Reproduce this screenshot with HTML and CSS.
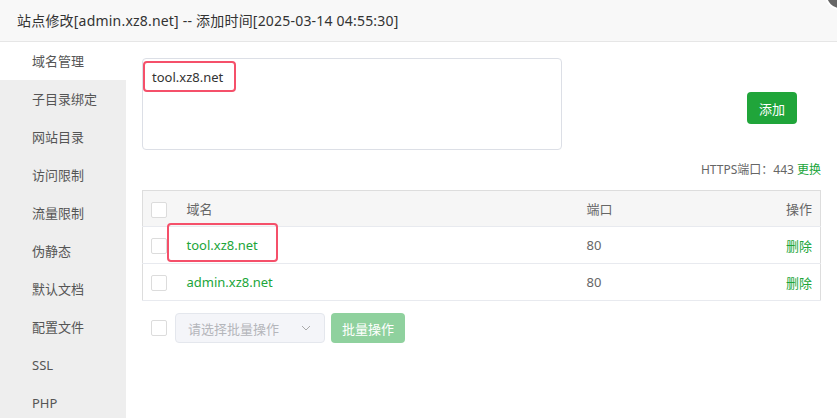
FILE: index.html
```html
<!DOCTYPE html>
<html lang="zh-CN">
<head>
    <meta charset="UTF-8">
    <meta name="viewport" content="width=device-width, initial-scale=1.0">
    <title>站点修改</title>
    <link rel="stylesheet" href="styles.css">
</head>
<body>
    <div class="dialog">
        <div class="dialog-title">站点修改[admin.xz8.net] -- 添加时间[2025-03-14 04:55:30]</div>
        <span class="close-btn"></span>

        <div class="dialog-body">
            <ul class="side-menu">
                <li class="active">域名管理</li>
                <li>子目录绑定</li>
                <li>网站目录</li>
                <li>访问限制</li>
                <li>流量限制</li>
                <li>伪静态</li>
                <li>默认文档</li>
                <li>配置文件</li>
                <li>SSL</li>
                <li>PHP</li>
            </ul>

            <div class="content">
                <div class="add-row">
                    <div class="domain-input">
                        <textarea id="domains">tool.xz8.net</textarea>
                        <span class="mark mark-input"></span>
                    </div>
                    <button type="button" class="btn btn-green">添加</button>
                </div>

                <div class="https-port">HTTPS端口：443 <a href="#">更换</a></div>

                <table class="domain-table">
                    <colgroup>
                        <col class="col-check">
                        <col class="col-name">
                        <col class="col-port">
                        <col>
                    </colgroup>
                    <thead>
                        <tr>
                            <th><span class="checkbox"></span></th>
                            <th>域名</th>
                            <th>端口</th>
                            <th class="right">操作</th>
                        </tr>
                    </thead>
                    <tbody>
                        <tr>
                            <td><span class="checkbox"></span></td>
                            <td class="name-cell"><a href="#">tool.xz8.net</a><span class="mark mark-row"></span></td>
                            <td>80</td>
                            <td class="right"><a href="#">删除</a></td>
                        </tr>
                        <tr>
                            <td><span class="checkbox"></span></td>
                            <td><a href="#">admin.xz8.net</a></td>
                            <td>80</td>
                            <td class="right"><a href="#">删除</a></td>
                        </tr>
                    </tbody>
                </table>

                <div class="batch-row">
                    <span class="checkbox"></span>
                    <div class="batch-select">
                        <span>请选择批量操作</span>
                        <svg width="10" height="6" viewBox="0 0 10 6"><path d="M1 1l4 4 4-4" fill="none" stroke="#aaa" stroke-width="1"/></svg>
                    </div>
                    <button type="button" class="btn btn-disabled">批量操作</button>
                </div>
            </div>
        </div>
    </div>
</body>
</html>
```

FILE: styles.css
```css
body {
    margin: 0;
    font-family: "Noto Sans", "Noto Sans CJK SC", sans-serif;
    color: #333;
    background: #fff;
}
.dialog {
    position: relative;
    width: 837px;
    height: 418px;
    overflow: hidden;
}
.dialog-title {
    height: 41px;
    line-height: 41px;
    padding-left: 17px;
    font-size: 14px;
    letter-spacing: 0.2px;
    color: #333;
    background: #f8f8f8;
    border-bottom: 1px solid #e6e6e6;
}
/* close button sits mostly outside the window, only its corner shows */
.close-btn {
    position: absolute;
    top: -20px;
    right: -18px;
    width: 26px;
    height: 26px;
    border-radius: 50%;
    background: #666;
    border: 2px solid #fff;
}
.close-btn::after {
    content: "";
    position: absolute;
    left: 2px;
    top: 12px;
    width: 10px;
    height: 2px;
    background: #fff;
    transform: rotate(-45deg);
}
.dialog-body {
    display: flex;
    height: 376px;
}
.side-menu {
    width: 126px;
    margin: 0;
    padding: 0;
    list-style: none;
    background: #eeeeee;
}
.side-menu li {
    height: 38px;
    line-height: 38px;
    padding-left: 32px;
    font-size: 13px;
    color: #555;
}
.side-menu li.active {
    background: #fff;
}
.content {
    flex: 1;
    padding: 16px 16px 0 16px;
}
.add-row {
    display: flex;
    justify-content: space-between;
    align-items: flex-start;
}
.domain-input {
    position: relative;
    width: 420px;
    height: 92px;
}
.domain-input textarea {
    box-sizing: border-box;
    width: 100%;
    height: 100%;
    padding: 9px 9px;
    border: 1px solid #dcdfe6;
    border-radius: 4px;
    font-family: inherit;
    font-size: 13px;
    line-height: 18px;
    color: #333;
    resize: none;
    outline: none;
}
.mark {
    position: absolute;
    border: 2px solid #f5506a;
    border-radius: 4px;
}
.mark-input {
    left: 1px;
    top: 3px;
    width: 89px;
    height: 27px;
}
.btn {
    border: none;
    border-radius: 4px;
    color: #fff;
    font-family: inherit;
    font-size: 13px;
    cursor: pointer;
}
.btn-green {
    width: 50px;
    height: 32px;
    margin-top: 34px;
    margin-right: 24px;
    background: #20a53a;
}
.btn-disabled {
    width: 74px;
    height: 30px;
    background: #8fd19e;
}
.https-port {
    margin-top: 12px;
    height: 16px;
    line-height: 16px;
    text-align: right;
    font-size: 12px;
    color: #666;
}
.https-port a,
.domain-table a {
    color: #20a53a;
    text-decoration: none;
}
.domain-table {
    width: 100%;
    margin-top: 12px;
    border-collapse: collapse;
    table-layout: fixed;
    border: 1px solid #ddd;
    font-size: 13px;
}
.col-check {
    width: 36px;
}
.col-name {
    width: 400px;
}
.col-port {
    width: 150px;
}
.domain-table th,
.domain-table td {
    padding: 0 8px;
    text-align: left;
    font-weight: normal;
    color: #666;
    border-bottom: 1px solid #e8eaef;
}
.domain-table th {
    height: 35px;
    background: #f6f6f6;
}
.domain-table td {
    height: 36px;
}
.domain-table .right {
    text-align: right;
}
.name-cell {
    position: relative;
}
.mark-row {
    left: -12px;
    top: -4px;
    width: 107px;
    height: 35px;
}
.checkbox {
    display: inline-block;
    box-sizing: border-box;
    width: 16px;
    height: 16px;
    vertical-align: middle;
    border: 1px solid #dcdcdc;
    border-radius: 2px;
    background: #fff;
}
.batch-row {
    display: flex;
    align-items: center;
    margin-top: 12px;
    padding-left: 9px;
}
.batch-select {
    display: flex;
    align-items: center;
    justify-content: space-between;
    box-sizing: border-box;
    width: 150px;
    height: 30px;
    margin: 0 6px 0 8px;
    padding: 0 13px 0 12px;
    background: #f4f5f9;
    border: 1px solid #e4e7ed;
    border-radius: 4px;
    font-size: 13px;
    color: #b4b6bb;
}
```
